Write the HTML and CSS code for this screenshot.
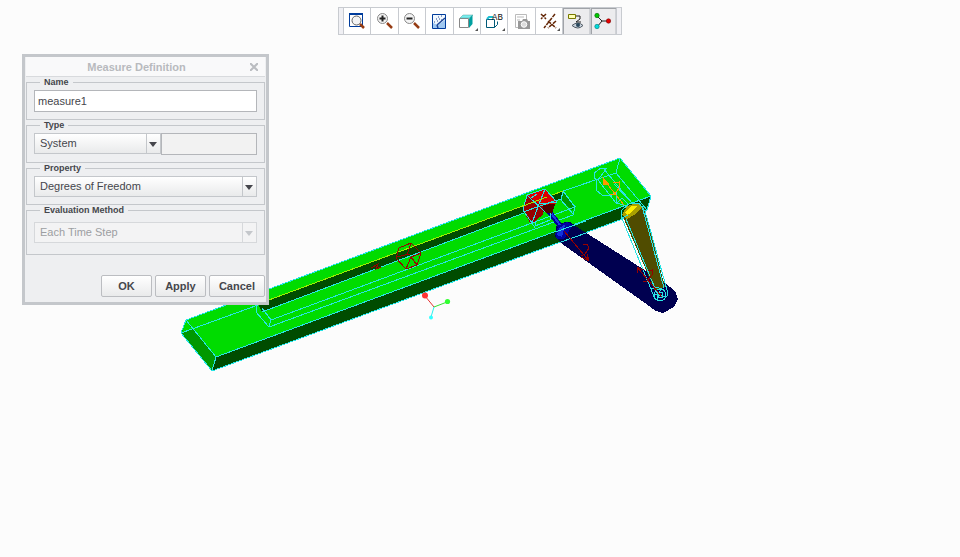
FILE: index.html
```
<!DOCTYPE html>
<html lang="en">
<head>
<meta charset="utf-8">
<title>Measure Definition</title>
<link rel="stylesheet" href="styles.css">
</head>
<body>
<main class="viewport">
  <svg class="scene" viewBox="0 0 960 557" preserveAspectRatio="xMinYMin meet" shape-rendering="crispEdges" role="img" aria-label="Mechanism model">
    <!-- guide bar -->
    <path fill="#00dc00" d="M186 320 620 158 651 196 216 357Z"/>
    <path fill="#009800" d="M186 320 216 357 212 371 181 333Z"/>
    <path fill="#00dc00" d="M186 320 192 329 182 333Z"/>
    <path fill="#004c00" d="M216 357 651 196 647 210 212 371Z"/>
    <path fill="#004c00" d="M258 304 563 191 561 199 262 312Z"/>
    <path fill="#009800" d="M563 192 575 207 572 210 561 200Z"/>
    <g fill="none" stroke="#28e4e4">
      <path d="M181 333 186 320 620 158 651 196 647 210 212 371ZM186 320 216 357 212 371M216 357 651 196M181 333 258 305M563 191 616 173 620 158M616 173 647 210"/>
      <path d="M257 306 256 312 269 327 271 320 262 308M271 320 575 207 573 215 269 327M262 312 561 199M563 191 575 207M563 191 561 200 573 214"/>
      <path d="M606 169 601 168 594 173 594 178 598 180 607 168M596 180 596 190 602 195 612 195 616 192M603 168 632 203M598 180 616 203 627 206M614 184 634 205M616 192 616 204M616 204 622 198 628 204"/>
    </g>
    <path fill="none" stroke="#9cf000" d="M258 304 563 191"/>
    <!-- joint markers on the bar -->
    <g fill="none" stroke="#9c0000">
      <path d="M399 248 411 243 421 253 417 265 406 269 396 258ZM396 257 410 254M411 243 407 255M406 269 411 257 417 265M411 257 421 253M371 268 378 264 376 269 381 267"/>
    </g>
    <g fill="none" stroke="#ff9600">
      <path fill="#ff9600" d="M603 178 609 184 604 185Z"/>
      <path d="M604 180 624 205M613 183 619 182 619 188 614 195 610 194M616 194 613 191"/>
    </g>
    <!-- cylinder and rod -->
    <path fill="#000050" d="M557 223 570 222 580 229 665 283 675 291 678 299 674 307 663 313 656 311 561 243 555 237Z"/>
    <path fill="#0000a0" d="M559 225 567 222 573 225 564 239 557 239 555 234Z"/>
    <path fill="#1432dc" d="M560 226 565 225 562 237 557 235Z"/>
    <path fill="none" stroke="#000096" stroke-width="5" d="M547 209 561 227"/>
    <path fill="none" stroke="#1a3cdc" stroke-width="2" d="M548 209 560 225"/>
    <path fill="none" stroke="#28e4e4" d="M555 232 586 221M561 242 586 233"/>
    <!-- slider block -->
    <path fill="#dc0000" d="M527 195 545 189 557 202 552 207 541 206Z"/>
    <path fill="#960000" d="M527 195 541 205 536 221 530 223 523 210Z"/>
    <path fill="#500000" d="M541 205 555 204 552 214 541 211Z"/>
    <path fill="#960000" d="M536 206 543 206 543 215 533 222Z"/>
    <g fill="none" stroke="#28e4e4">
      <path d="M527 195 545 189 557 202M532 223 523 210 527 195 545 212M545 189 539 204 557 202M539 204 532 223M523 212 557 200M531 198 537 194M535 222 535 226 550 220 551 213M532 223 535 228"/>
    </g>
    <path fill="none" stroke="#9cf000" d="M523 206 547 197"/>
    <!-- crank link -->
    <path fill="#504c00" d="M623 217 644 207 665 287 655 291 650 279Z"/>
    <path fill="#aaa000" d="M622 215 627 206 637 203 642 207 636 214 627 219Z"/>
    <path fill="#fff000" d="M625 212 632 206 637 206 631 213 627 215Z"/>
    <g fill="none" stroke="#28e4e4">
      <path d="M655 299 621 216 622 210 629 204 639 203 645 211 667 290 667 296 662 301M642 206 664 288M626 219 657 293M648 208 645 211M622 218 628 215M650 289 657 287 664 290"/>
      <circle cx="660" cy="295" r="6"/><circle cx="660" cy="295" r="3"/>
      <path d="M653 294 666 297M661 288 657 300"/>
    </g>
    <g fill="none" stroke="#960000">
      <path d="M564 231 589 261M589 261 587 254M589 261 581 257M583 245 587 244 589 248 585 254 581 256"/>
      <path d="M637 267 662 297M637 267 638 273M637 267 643 270M648 271 652 270 652 275 647 281 643 282"/>
    </g>
    <!-- orientation triad -->
    <g shape-rendering="auto">
      <path stroke="#e63232" d="M425 296 434 307"/><path stroke="#32e632" d="M434 307 447 302"/><path stroke="#28f0f0" d="M434 307 431 317"/>
      <circle cx="425" cy="295.500" r="3" fill="#ff3232"/><circle cx="447.500" cy="301.500" r="2.600" fill="#32ff32"/><circle cx="431" cy="317.500" r="2" fill="#32ffff"/>
    </g>
  </svg>

  <nav class="toolbar" aria-label="Graphics view">
    <button class="tool" aria-label="Refit"><svg viewBox="0 0 20 20"><path d="M2.500 2.500h13v13h-13z" fill="#fff" stroke="#003c9c"/><path d="M2 3h14" stroke="#003c9c" stroke-width="2"/><circle cx="9.500" cy="9.500" r="4.500" fill="#f4f4f4" stroke="#666"/><path d="m13 13 4 4" stroke="#963c14" stroke-width="2.500"/></svg></button>
    <button class="tool" aria-label="Zoom in"><svg viewBox="0 0 20 20"><circle cx="7.500" cy="7.500" r="5" fill="#f4f4f4" stroke="#888"/><path d="M4.500 7.500h6M7.500 4.500v6" stroke="#222" stroke-width="2"/><path d="m12 12 5 5" stroke="#963c14" stroke-width="2.500"/></svg></button>
    <button class="tool" aria-label="Zoom out"><svg viewBox="0 0 20 20"><circle cx="7.500" cy="7.500" r="5" fill="#f4f4f4" stroke="#888"/><path d="M4.500 7.500h6" stroke="#222" stroke-width="2"/><path d="m12 12 5 5" stroke="#963c14" stroke-width="2.500"/></svg></button>
    <button class="tool" aria-label="Repaint"><svg viewBox="0 0 20 20"><path d="M3.500 3.500h13v14h-13z" fill="#a0c8f0" stroke="#003c9c"/><path d="M4 4h12v5l-7 5-5-2z" fill="#f0f8ff"/><path d="M9 6h1M12 5h1M7 8h1M10 8h1M8 10h1M12 9h1M5 11h1" stroke="#28468c"/><path d="m8 14 8-7M8 14l1 3" stroke="#1e4696" stroke-width="1.500"/></svg></button>
    <button class="tool has-menu" aria-label="Display style"><svg viewBox="0 0 20 20"><path d="M2.500 7.500h9v9h-9z" fill="#fff" stroke="#888"/><path d="m3 7 3-3h10l-4 3z" fill="#78f0f0" stroke="#5aa0a0" stroke-width=".5"/><path d="m12 7.500 3.500-3.500v9L12 17z" fill="#00a0a0"/></svg></button>
    <button class="tool has-menu" aria-label="Saved orientations"><svg viewBox="0 0 20 20"><path d="M2.500 16.500v-8h8v8zM10.500 16.500l3-3v-3" fill="#fff" stroke="#005a78"/><path d="m3 8 2-2h4" stroke="#1ebed2" stroke-width="2" fill="none"/><text x="8" y="9" class="ab">AB</text></svg></button>
    <button class="tool" aria-label="View manager" disabled><svg viewBox="0 0 20 20"><path d="M3.500 16.500v-13h11v5M3.500 16.500h3M5 6h7M5 9h3" fill="none" stroke="#bbb"/><path d="M6 10h4l1-2h4l1 2h2v8H6z" fill="#999"/><circle cx="12" cy="13.500" r="2.800" fill="#ddd" stroke="#fff"/></svg></button>
    <button class="tool has-menu" aria-label="Datum display"><svg viewBox="0 0 20 20"><path d="m2 3 5 5M7 3 2 8M16 3 5 17M9 10l8 7M17 10l-8 7" fill="none" stroke="#642808" stroke-width="1.500" stroke-dasharray="4 1"/></svg></button>
    <button class="tool" aria-label="Annotation display" aria-pressed="true"><svg viewBox="0 0 20 20"><path d="M2.500 3.500h7v4h-7z" fill="#ffffb4" stroke="#787800"/><path d="M10 5h4v3l-4 3h5" fill="none" stroke="#222"/><path d="M6 14.500q6-5 11 0-5 5-11 0z" fill="#c8d2dc" stroke="#505a64"/><circle cx="12" cy="14" r="2" fill="#28465a"/></svg></button>
    <button class="tool" aria-label="Spin center" aria-pressed="true"><svg viewBox="0 0 20 20"><path d="m4 5 5 5-5 6M9 10h7" fill="none" stroke="#222"/><circle cx="4" cy="4.500" r="2.200" fill="#00c800" stroke="#006400" stroke-width=".6"/><circle cx="4" cy="15.500" r="2.200" fill="#00dcdc" stroke="#007878" stroke-width=".6"/><circle cx="15.500" cy="10" r="2.200" fill="#e60000" stroke="#780000" stroke-width=".6"/></svg></button>
  </nav>

  <form class="dialog" aria-labelledby="dialog-title">
    <header class="titlebar">
      <h1 class="title" id="dialog-title">Measure Definition</h1>
      <button class="close" type="button" aria-label="Close"><svg viewBox="0 0 8 8"><path d="m0 0 8 8M8 0 0 8" stroke="#babcc0" stroke-width="2"/></svg></button>
    </header>
    <fieldset class="group">
      <legend><label for="name">Name</label></legend>
      <input class="field" id="name" type="text" value="measure1">
    </fieldset>
    <fieldset class="group">
      <legend><label for="type">Type</label></legend>
      <div class="row">
        <div class="combo"><select id="type"><option>System</option></select></div>
        <input class="field target" type="text" aria-label="Type reference" disabled>
      </div>
    </fieldset>
    <fieldset class="group">
      <legend><label for="property">Property</label></legend>
      <div class="combo"><select id="property"><option>Degrees of Freedom</option></select></div>
    </fieldset>
    <fieldset class="group evaluation">
      <legend><label for="method">Evaluation Method</label></legend>
      <div class="combo off"><select id="method" disabled><option>Each Time Step</option></select></div>
    </fieldset>
    <footer class="actions">
      <button class="action" type="button">OK</button>
      <button class="action" type="button">Apply</button>
      <button class="action" type="button">Cancel</button>
    </footer>
  </form>
</main>
</body>
</html>
```
FILE: styles.css
```
* { box-sizing: border-box; }

body {
  margin: 0;
  background: #fcfcfc;
  color: #45464c;
  font: 11px/14px "Liberation Sans", Arial, sans-serif;
}

button, input, select { font: inherit; color: inherit; margin: 0; }

.viewport {
  position: relative;
  min-height: 100vh;
  overflow: hidden;
}

.scene { display: block; width: 100%; }

.toolbar {
  position: absolute;
  top: 7px;
  left: 50%;
  transform: translateX(-50%);
  display: grid;
  grid-template-columns: repeat(10, 1fr);
  width: 284px;
  height: 28px;
  padding: 0 4px;
  border: 1px solid #c8cbd0;
  background: #f0f0f4;
}

.tool {
  position: relative;
  display: grid;
  place-items: center;
  padding: 0;
  border: 0;
  border-left: 1px solid #c8cbd0;
  background: #fff;
}
.tool:last-child { border-right: 1px solid #c8cbd0; }
.tool svg { width: 20px; height: 20px; }
.tool[aria-pressed="true"] {
  background: #ececee;
  box-shadow: inset 1px 1px #a0a3a8, inset -1px 0 #d0d2d6;
}
.has-menu::after {
  content: "";
  position: absolute;
  right: 2px;
  bottom: 3px;
  border-left: 3px solid transparent;
  border-bottom: 3px solid #555;
}
.ab { font: 9px "Liberation Mono", monospace; fill: #111; }

.dialog {
  position: absolute;
  top: 54px;
  left: 22px;
  width: 247px;
  padding: 0 1px 5px;
  border: 3px solid #c4c7cb;
  background: #eeeff1;
}

.titlebar {
  position: relative;
  display: flex;
  align-items: center;
  justify-content: center;
  height: 20px;
  padding-right: 18px;
  border-bottom: 1px solid #d8dadd;
  background: #f9f9fa;
}
.title { margin: 0; font-size: 11px; color: #b8babe; }
.close {
  position: absolute;
  top: 4px;
  right: 5px;
  padding: 2px;
  border: 0;
  background: none;
}
.close svg { display: block; width: 8px; height: 8px; }

.group {
  min-width: 0;
  margin: 0;
  padding: 3px 7px 7px;
  border: 1px solid #c4c7cb;
}
.group legend {
  margin-left: 6px;
  padding: 0 4px;
  font-size: 9px;
  font-weight: bold;
  line-height: 10px;
}
.group label { display: block; }
.evaluation { padding: 7px 7px 11px; }

.row { display: grid; grid-template-columns: 127px 1fr; }

.field {
  display: block;
  width: 100%;
  height: 22px;
  padding: 0 3px;
  border: 1px solid #b4b6ba;
  border-radius: 0;
  background: #fff;
}
.field:disabled { background: #f2f2f2; }

.combo {
  position: relative;
  height: 21px;
  border: 1px solid #c4c7cb;
  background: linear-gradient(#fff, #e9eaeb);
}
.combo select {
  display: block;
  width: 100%;
  height: 19px;
  padding: 0 18px 1px 5px;
  border: 0;
  appearance: none;
  background: none;
  opacity: 1;
}
.combo::before {
  content: "";
  position: absolute;
  top: 0;
  right: 13px;
  bottom: 0;
  border-left: 1px solid #c4c7cb;
}
.combo::after {
  content: "";
  position: absolute;
  top: 8px;
  right: 3px;
  border: 4px solid transparent;
  border-top: 5px solid #45464c;
  border-bottom: 0;
}
.off { color: #9c9ea2; border-color: #d6d8db; background: #f3f3f4; }
.off::before { border-color: #d6d8db; }
.off::after { border-top-color: #c4c7cb; }

.actions {
  display: flex;
  justify-content: flex-end;
  gap: 3px;
  padding-top: 20px;
}
.action {
  min-width: 51px;
  height: 22px;
  padding: 0 9px;
  border: 1px solid #bbbdc1;
  border-radius: 2px;
  background: linear-gradient(#fff, #e9eaeb);
  font-size: 11px;
  font-weight: bold;
}
```
